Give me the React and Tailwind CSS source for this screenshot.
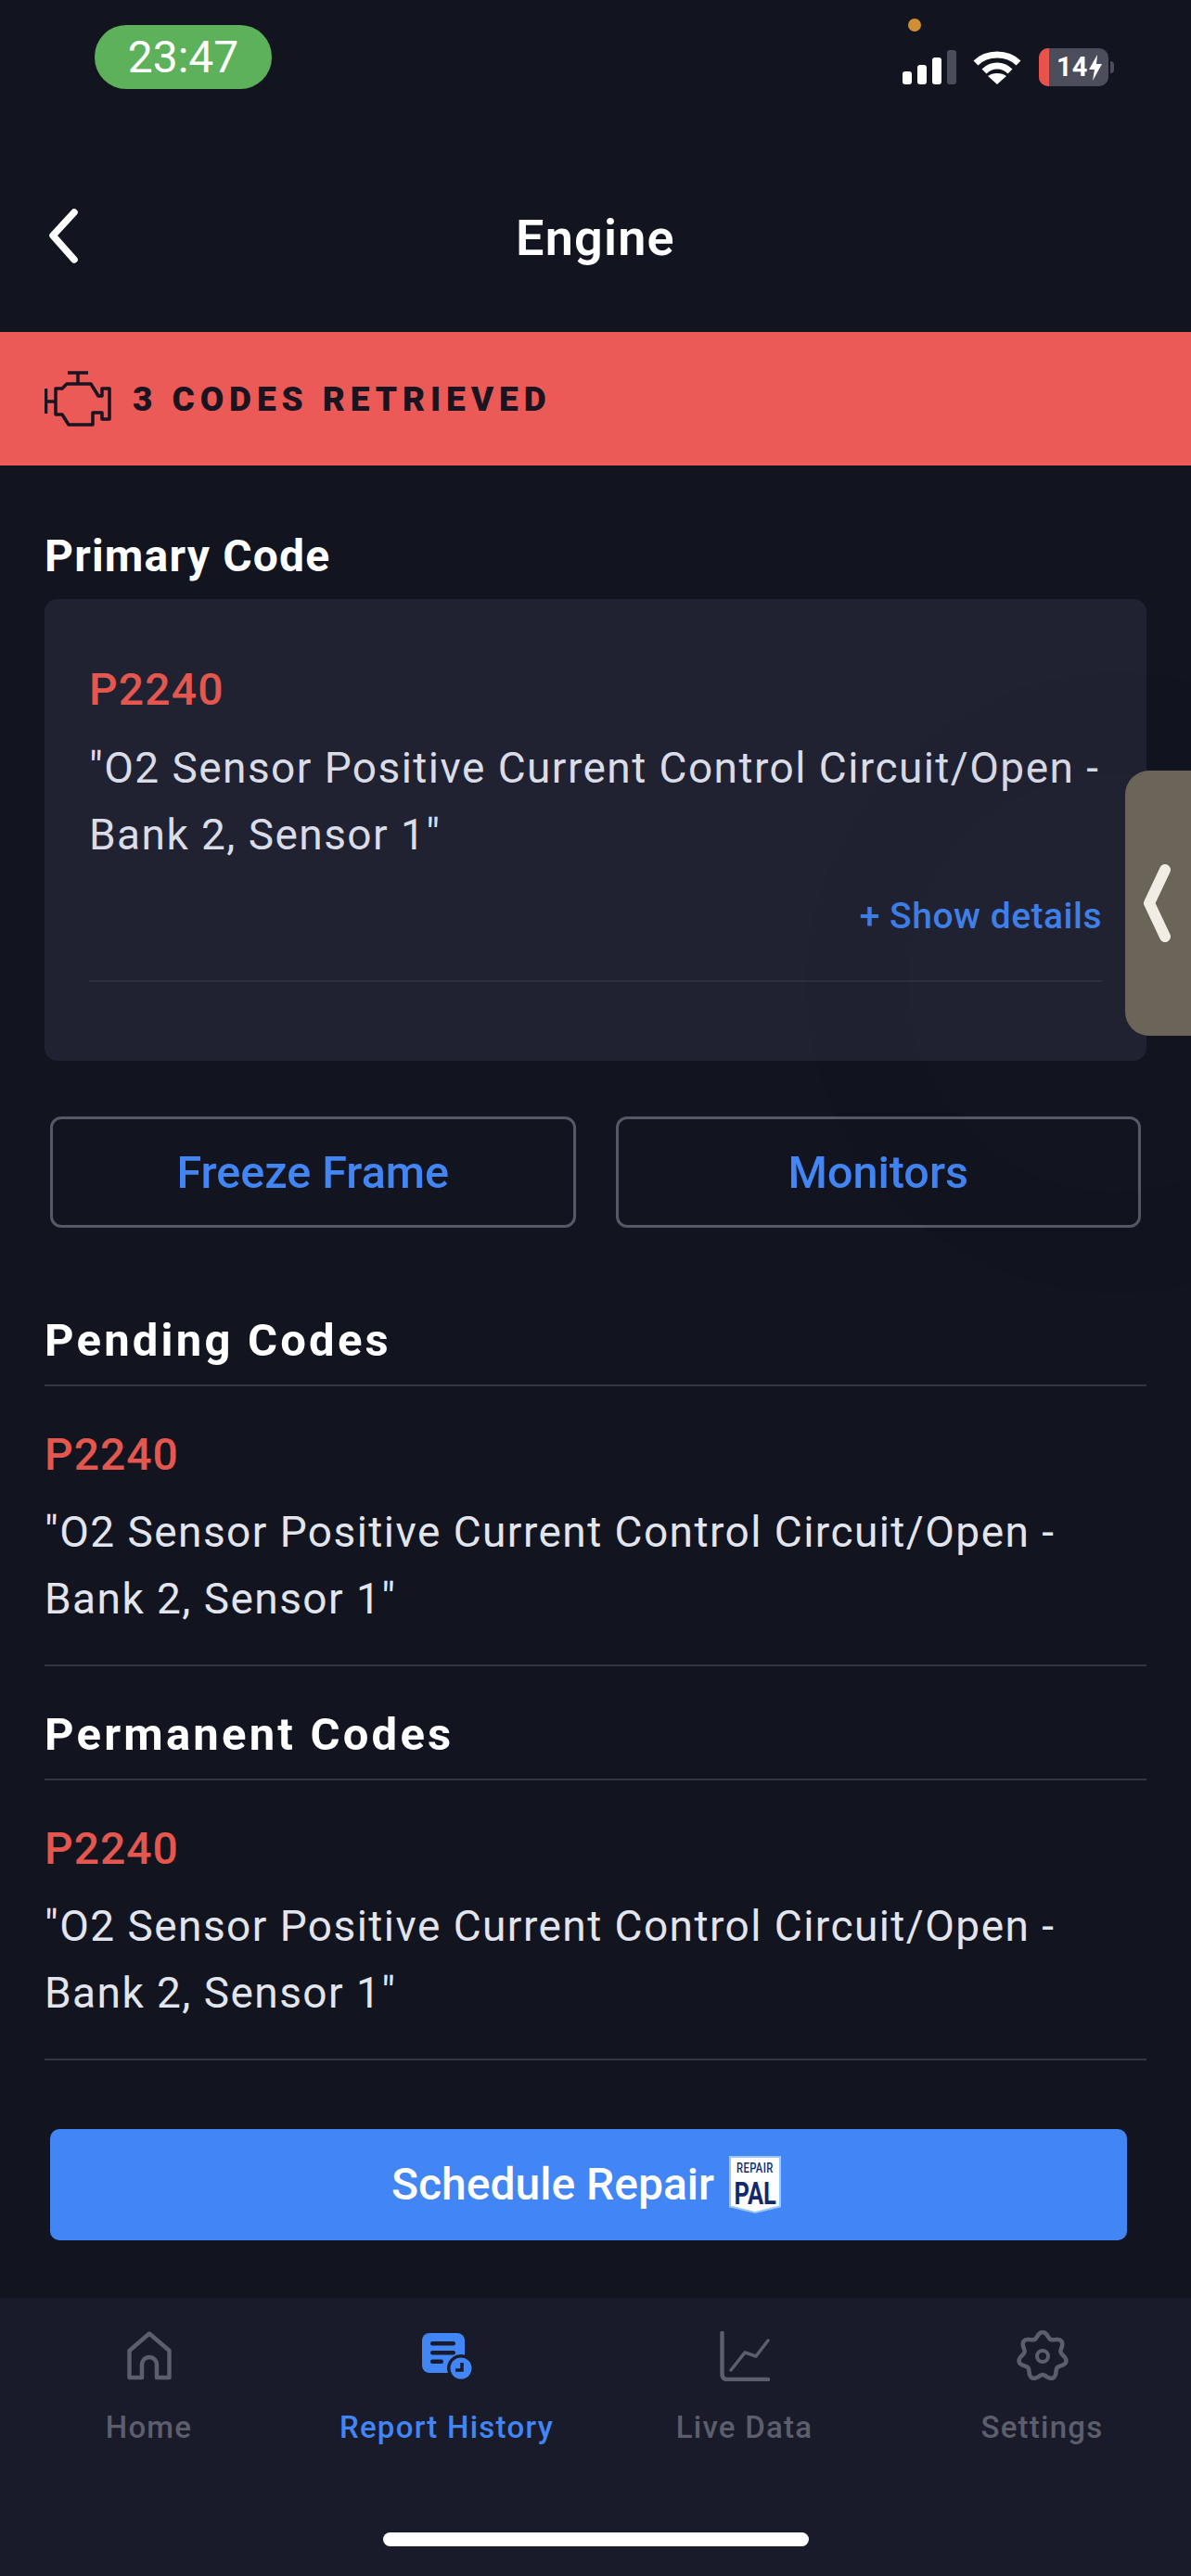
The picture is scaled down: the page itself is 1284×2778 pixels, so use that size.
const descLines = (
  <>
    "O2 Sensor Positive Current Control Circuit/Open -<br />
    Bank 2, Sensor 1"
  </>
);

function StatusBar() {
  return (
    <div className="relative h-[200px] shrink-0">
      <div className="absolute left-[102px] top-[27px] flex h-[69px] w-[191px] items-center justify-center rounded-[34px] bg-[#5cb15a] text-[48px] text-white">
        23:47
      </div>
      <div className="absolute left-[979px] top-[20px] h-[14px] w-[14px] rounded-full bg-[#cf8f35]" />
      <div className="absolute left-[973px] top-[53px] flex h-[38px] items-end gap-[6px]">
        <div className="h-[14px] w-[10px] rounded-[3px] bg-white" />
        <div className="h-[21px] w-[10px] rounded-[3px] bg-white" />
        <div className="h-[29px] w-[10px] rounded-[3px] bg-white" />
        <div className="h-[37px] w-[10px] rounded-[3px] bg-[#4c4d5a]" />
      </div>
      <svg className="absolute left-[1049px] top-[53px]" width="52" height="38" viewBox="0 0 52 38">
        <path d="M3 15 C15 3 37 3 49 15" fill="none" stroke="#fff" strokeWidth="7" />
        <path d="M12 24 C20 16 32 16 40 24" fill="none" stroke="#fff" strokeWidth="7" />
        <path d="M26 38 L16 29 C21 25 31 25 36 29 Z" fill="#fff" />
      </svg>
      <div className="absolute left-[1120px] top-[52px] flex h-[41px] w-[75px] items-center overflow-hidden rounded-[10px] bg-[#4c4d5a]">
        <div className="h-full w-[11px] shrink-0 bg-[#e8524a]" />
        <span className="ml-[8px] text-[29px] leading-none font-bold text-white">14</span>
        <svg className="ml-[1px]" width="16" height="30" viewBox="0 0 16 30">
          <path d="M10 1 L1 17 H7 L5 29 L15 11 H9 Z" fill="#fff" />
        </svg>
      </div>
      <div className="absolute left-[1197px] top-[66px] h-[13px] w-[4px] rounded-r-full bg-[#4c4d5a]" />
    </div>
  );
}

function Header() {
  return (
    <div className="relative flex h-[158px] shrink-0 items-start justify-center pt-[25px]">
      <svg className="absolute left-[48px] top-[23px]" width="40" height="62" viewBox="0 0 40 62">
        <path d="M32 6 L9 31 L32 57" fill="none" stroke="#fff" strokeWidth="7.5" strokeLinecap="round" strokeLinejoin="round" />
      </svg>
      <h1 className="text-[54px] leading-[64px] font-semibold tracking-[1.2px] text-white">Engine</h1>
    </div>
  );
}

function EngineIcon() {
  return (
    <svg width="72" height="60" viewBox="0 0 72 60" fill="none" stroke="#1a1320" strokeWidth="3.5" strokeLinejoin="round">
      <path d="M25 2 H47 M36 2 V14" />
      <path d="M1.5 19 V46 M1.5 33 H12" />
      <path d="M12 19 H19 L24 14 H50 L58 27 H62 V19 H70 V52 H62 V45 H52 V58 H26 L19 47 H12 Z" />
    </svg>
  );
}

function CodeBlock({ title }) {
  return (
    <section className="px-[48px]">
      <h2 className="border-b-2 border-[#33353f] pb-[17px] text-[49px] leading-[60px] font-bold tracking-[3.2px] text-white">{title}</h2>
      <div className="border-b-2 border-[#33353f] pb-[35px] pt-[44px]">
        <div className="text-[48px] leading-[60px] font-medium tracking-[1px] text-[#e4574f]">P2240</div>
        <p className="mt-[17px] text-[46px] leading-[72px] tracking-[1.45px] text-[#e3e5ee]">{descLines}</p>
      </div>
    </section>
  );
}

function HomeIcon() {
  return (
    <svg width="48" height="54" viewBox="0 0 48 54" fill="none" stroke="#5c5e6c" strokeWidth="4.5" strokeLinejoin="round">
      <path d="M2.5 21 L24 2.5 L45.5 21 V50 H32 V36 A8 8 0 0 0 16 36 V50 H2.5 Z" />
    </svg>
  );
}

function HistoryIcon() {
  return (
    <svg width="54" height="50" viewBox="0 0 54 50">
      <rect x="0" y="0" width="46" height="43" rx="8" fill="#4285f4" />
      <rect x="9" y="9" width="27" height="4.5" rx="2.2" fill="#191b2b" />
      <rect x="9" y="19" width="27" height="4.5" rx="2.2" fill="#191b2b" />
      <rect x="9" y="28.5" width="14" height="4.5" rx="2.2" fill="#191b2b" />
      <circle cx="42" cy="38" r="15" fill="#191b2b" />
      <circle cx="42" cy="38" r="11.5" fill="#4285f4" />
      <path d="M43 32 V40 H36" fill="none" stroke="#191b2b" strokeWidth="3.5" />
    </svg>
  );
}

function ChartIcon() {
  return (
    <svg width="54" height="54" viewBox="0 0 54 54" fill="none" stroke="#5c5e6c" strokeWidth="4.5" strokeLinecap="round" strokeLinejoin="round">
      <path d="M2.5 2 V46 Q2.5 52 8 52 H52" />
      <path d="M12 42 L27 23 L39 27 L52 10" strokeWidth="3.5" />
    </svg>
  );
}

// seven soft lobes, the shape of the gear in the tab bar
const gearPath = Array.from({ length: 141 }, (_, i) => {
  const a = (i / 140) * Math.PI * 2;
  const r = 23 + 3 * Math.cos(7 * a);
  const x = 28 + r * Math.sin(a);
  const y = 28 - r * Math.cos(a);
  return `${i === 0 ? "M" : "L"}${x.toFixed(2)} ${y.toFixed(2)}`;
}).join(" ");

function GearIcon() {
  return (
    <svg width="56" height="56" viewBox="0 0 56 56" fill="none" stroke="#5c5e6c" strokeWidth="4.5">
      <path d={gearPath} />
      <circle cx="28" cy="28" r="6" strokeWidth="4" />
    </svg>
  );
}

function NavItem({ icon, label, active }) {
  return (
    <div className="flex flex-1 flex-col items-center">
      <div className="flex h-[60px] items-center justify-center">{icon}</div>
      <span className={`mt-[27px] text-[33px] leading-[40px] font-medium tracking-[1.25px] ${active ? "text-[#4285f4]" : "text-[#5c5e6c]"}`}>
        {label}
      </span>
    </div>
  );
}

function RepairPalLogo() {
  return (
    <span className="flex h-[62px] w-[56px] items-center justify-center bg-[#9cc6f5] [clip-path:polygon(0_0,100%_0,100%_89%,50%_100%,0_89%)]">
      <span className="flex h-[58px] w-[52px] flex-col items-center bg-white pt-[3px] text-[#12296e] [clip-path:polygon(0_0,100%_0,100%_89%,50%_100%,0_89%)]">
        <span className="scale-x-[0.8] text-[14px] leading-[16px] font-medium tracking-[0.5px]">REPAIR</span>
        <span className="scale-x-[0.75] text-[34px] leading-[38px] font-bold">PAL</span>
      </span>
    </span>
  );
}

export default function App() {
  return (
    <div className="relative flex h-[2778px] w-[1284px] flex-col overflow-hidden bg-[#12141f] font-['Roboto',sans-serif]">
      <StatusBar />
      <Header />

      <div className="flex h-[144px] shrink-0 items-center gap-[23px] bg-[#eb5a57] pl-[48px]">
        <EngineIcon />
        <span className="text-[37px] leading-none font-black tracking-[5.9px] text-[#1a1320]">3 CODES RETRIEVED</span>
      </div>

      <section className="px-[48px] pt-[68px]">
        <h2 className="text-[48px] leading-[60px] font-bold tracking-[1.2px] text-white">Primary Code</h2>
        <div className="mt-[16px] h-[498px] rounded-[14px] bg-[#202231] px-[48px] pt-[68px]">
          <div className="text-[48px] leading-[60px] font-medium tracking-[1.2px] text-[#e4574f]">P2240</div>
          <p className="mt-[18px] text-[46px] leading-[72px] tracking-[1.45px] text-[#dadce8]">{descLines}</p>
          <div className="mt-[30px] text-right text-[39px] leading-[44px] font-medium tracking-[0.5px] text-[#3f7fe8]">+ Show details</div>
          <div className="mt-[47px] h-[2px] bg-[#2d2f3d]" />
        </div>
      </section>

      <div className="mt-[60px] grid grid-cols-2 gap-[43px] px-[54px]">
        <button className="h-[120px] rounded-[12px] border-[3px] border-[#565865] pt-[2px] text-[48.5px] font-medium text-[#4285f4]">Freeze Frame</button>
        <button className="h-[120px] rounded-[12px] border-[3px] border-[#565865] pt-[2px] text-[48.5px] font-medium text-[#4285f4]">Monitors</button>
      </div>

      <div className="mt-[92px]">
        <CodeBlock title="Pending Codes" />
      </div>
      <div className="mt-[44px]">
        <CodeBlock title="Permanent Codes" />
      </div>

      <div className="mt-[74px] pl-[54px] pr-[69px]">
        <button className="flex h-[120px] w-full items-center justify-center gap-[16px] rounded-[10px] bg-[#4285f4] pr-[5px] text-[48px] font-medium text-white">
          Schedule Repair
          <RepairPalLogo />
        </button>
      </div>

      <nav className="mt-auto flex h-[300px] shrink-0 flex-col bg-[#191b2b] pt-[33px]">
        <div className="flex">
          <NavItem icon={<HomeIcon />} label="Home" />
          <NavItem icon={<HistoryIcon />} label="Report History" active />
          <NavItem icon={<ChartIcon />} label="Live Data" />
          <NavItem icon={<GearIcon />} label="Settings" />
        </div>
        <div className="mx-auto mt-[93px] h-[15px] w-[459px] rounded-full bg-white" />
      </nav>

      {/* faint ring watermark behind the card's right side */}
      <svg className="pointer-events-none absolute left-[860px] top-[660px]" width="424" height="760" viewBox="0 0 424 760">
        <circle cx="344" cy="400" r="280" fill="none" stroke="#000" strokeOpacity="0.02" strokeWidth="110" />
      </svg>

      {/* side handle sits over the card */}
      <div className="absolute left-[1213px] top-[831px] flex h-[286px] w-[71px] items-center rounded-l-[26px] bg-[#6b6559]">
        <svg className="ml-[19px] -mt-[1px]" width="30" height="84" viewBox="0 0 30 84">
          <path d="M24 6 L7 42 L24 78" fill="none" stroke="#f1ece4" strokeWidth="12" strokeLinecap="round" strokeLinejoin="round" />
        </svg>
      </div>
    </div>
  );
}
